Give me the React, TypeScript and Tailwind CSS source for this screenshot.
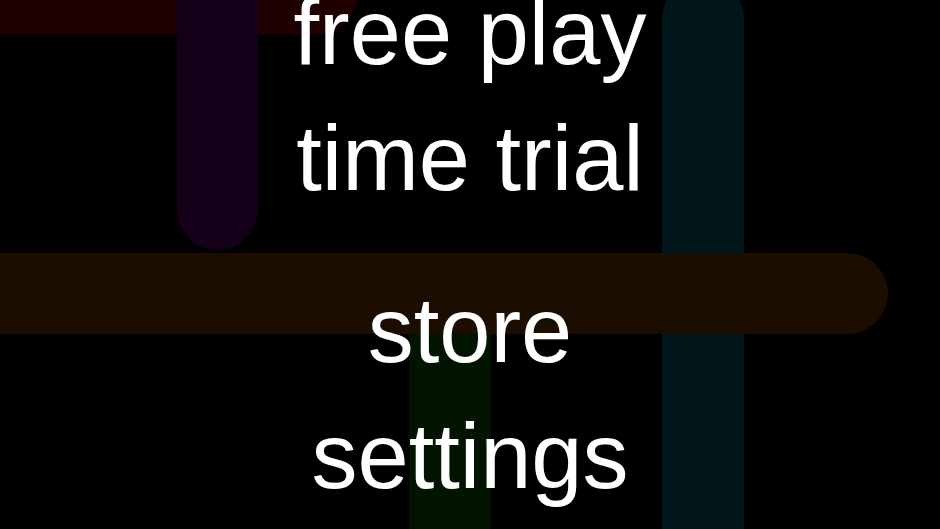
import React from 'react';

// Dim pipes drawn behind the menu, like the game's idle board
const Pipes: React.FC = () => (
  <div className="absolute inset-0">
    {/* red, top-left, running off the top edge */}
    <div className="absolute left-[-40px] top-[-46px] h-[81px] w-[397px] rounded-full bg-[#1f0000]" />
    {/* purple, hanging down */}
    <div className="absolute left-[177px] top-[-60px] h-[310px] w-[81px] rounded-full bg-[#15001a]" />
    {/* teal, right side */}
    <div className="absolute left-[662px] top-[-22px] h-[600px] w-[82px] rounded-full bg-[#00161a]" />
    {/* green, below the orange pipe */}
    <div className="absolute left-[409px] top-[300px] h-[300px] w-[82px] bg-[#001400]" />
    {/* orange, across the middle */}
    <div className="absolute left-[-60px] top-[253px] h-[81px] w-[948px] rounded-full bg-[#1b0e00]" />
  </div>
);

const items = ['free play', 'time trial', 'store', 'settings'];

export default function App() {
  return (
    <div className="relative h-[529px] w-[940px] overflow-hidden bg-black">
      <Pipes />
      <div
        className="relative -mt-[31px] flex flex-col items-center text-white text-[92px] leading-[126px]"
        style={{ fontFamily: '"Liberation Sans", Arial, sans-serif' }}
      >
        {items.map((label, i) => (
          <div key={label} className={i === 2 ? 'mt-[46px] whitespace-nowrap' : 'whitespace-nowrap'}>
            {label}
          </div>
        ))}
      </div>
    </div>
  );
}
